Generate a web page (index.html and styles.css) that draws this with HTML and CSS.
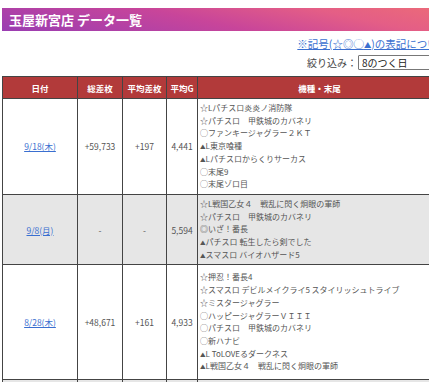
FILE: index.html
```html
<!DOCTYPE html>
<html lang="ja">
<head>
<meta charset="utf-8">
<title>玉屋新宮店 データ一覧</title>
<link rel="stylesheet" href="styles.css">
</head>
<body>
<div class="page">
  <h1 class="title">玉屋新宮店 データ一覧</h1>
  <div class="note"><a href="#">※記号(☆◎◯<span class="tri">▲</span>)の表記について</a></div>
  <div class="filter">
    <span class="filter-label">絞り込み：</span>
    <span class="select"><span class="select-text">8のつく日</span><span class="select-arrow">▾</span></span>
  </div>
  <table class="data">
    <thead>
      <tr>
        <th class="c-date">日付</th>
        <th class="c-total">総差枚</th>
        <th class="c-avg">平均差枚</th>
        <th class="c-g">平均G</th>
        <th class="c-list">機種・末尾</th>
      </tr>
    </thead>
    <tbody>
      <tr>
        <td class="c-date"><a href="#">9/18(木)</a></td>
        <td class="num">+59,733</td>
        <td class="num">+197</td>
        <td class="num">4,441</td>
        <td class="c-list">
          <div>☆Lパチスロ炎炎ノ消防隊</div>
          <div>☆パチスロ　甲鉄城のカバネリ</div>
          <div>◯ファンキージャグラー２ＫＴ</div>
          <div><span class="tri">▲</span>L東京喰種</div>
          <div><span class="tri">▲</span>Lパチスロからくりサーカス</div>
          <div>◯末尾9</div>
          <div>◯末尾ゾロ目</div>
        </td>
      </tr>
      <tr class="alt">
        <td class="c-date"><a href="#">9/8(月)</a></td>
        <td class="num">-</td>
        <td class="num">-</td>
        <td class="num">5,594</td>
        <td class="c-list">
          <div>☆L戦国乙女４　戦乱に閃く炯眼の軍師</div>
          <div>☆パチスロ　甲鉄城のカバネリ</div>
          <div>◎いざ！番長</div>
          <div><span class="tri">▲</span>パチスロ 転生したら剣でした</div>
          <div><span class="tri">▲</span>スマスロ バイオハザード5</div>
        </td>
      </tr>
      <tr class="tall">
        <td class="c-date"><a href="#">8/28(木)</a></td>
        <td class="num">+48,671</td>
        <td class="num">+161</td>
        <td class="num">4,933</td>
        <td class="c-list">
          <div>☆押忍！番長4</div>
          <div>☆スマスロ デビルメイクライ5 スタイリッシュトライブ</div>
          <div>☆ミスタージャグラー</div>
          <div>◯ハッピージャグラーＶＩＩＩ</div>
          <div>◯パチスロ　甲鉄城のカバネリ</div>
          <div>◯新ハナビ</div>
          <div><span class="tri">▲</span>L ToLOVEるダークネス</div>
          <div><span class="tri">▲</span>L戦国乙女４　戦乱に閃く炯眼の軍師</div>
        </td>
      </tr>
      <tr class="alt">
        <td class="c-date"><a href="#">8/18(月)</a></td>
        <td class="num">+12,345</td>
        <td class="num">+40</td>
        <td class="num">4,210</td>
        <td class="c-list">
          <div>&nbsp;</div>
          <div>☆スマスロ北斗の拳</div>
          <div>☆パチスロ　甲鉄城のカバネリ</div>
          <div>◯ミスタージャグラー</div>
          <div>◯新ハナビ</div>
          <div><span class="tri">▲</span>スマスロ バイオハザード5</div>
        </td>
      </tr>
    </tbody>
  </table>
</div>
</body>
</html>
```
FILE: styles.css
```css
html, body {
  margin: 0;
  padding: 0;
  background: #ffffff;
}
body {
  margin: 8px 2px;
  font-family: "Noto Sans CJK JP", "Noto Sans", sans-serif;
  color: #444;
}
.page {
  width: 446px;
}
.title {
  margin: 0;
  height: 23px;
  line-height: 23px;
  padding-left: 7px;
  font-size: 13px;
  font-weight: bold;
  color: #fff;
  background: linear-gradient(12deg, #9a3db2 0%, #c8459a 45%, #e45e86 75%, #ec6b78 100%);
}
.note {
  text-align: right;
  margin-top: 5px;
  font-size: 10.5px;
  line-height: 15px;
}
.note a {
  color: #3a6fd0;
  text-decoration: underline;
}
.tri {
  font-size: 0.7em;
  line-height: 0;
}
.filter {
  display: flex;
  justify-content: flex-end;
  align-items: center;
  margin-top: 4px;
  padding-right: 10px;
  height: 15px;
  font-size: 10px;
  color: #444;
}
.filter-label {
  margin-right: 1px;
}
.select {
  display: flex;
  align-items: center;
  justify-content: space-between;
  box-sizing: border-box;
  width: 80px;
  height: 15px;
  border: 1px solid #777;
  border-radius: 1px;
  padding: 0 2px 0 3px;
  font-size: 10px;
  color: #222;
}
.select-arrow {
  font-size: 9px;
}
.data {
  margin-top: 6px;
  width: 440px;
  border-collapse: collapse;
  font-size: 8px;
  color: #555;
}
.data th {
  background: #b23a3a;
  color: #fff;
  font-weight: bold;
  font-size: 8.5px;
  height: 21px;
  padding: 0;
  border: 1px solid #444;
  text-align: center;
}
.data td {
  border: 1px solid #444;
  padding: 4px 3px;
  text-align: center;
  vertical-align: middle;
}
.data .c-date { width: 68px; }
.data .c-total { width: 44px; }
.data .c-avg { width: 43px; }
.data .c-g { width: 30px; }
.data td.num {
  font-size: 8.5px;
  color: #555;
}
.data td.c-list {
  text-align: left;
  padding: 3px 2px;
  line-height: 12.7px;
}
.data tr.tall td.c-list {
  padding: 6px 2px;
}
.data td.c-date a {
  color: #3a6fd0;
  font-size: 8.5px;
  text-decoration: underline;
}
.data tr.alt td {
  background: #e6e6e6;
}
```
